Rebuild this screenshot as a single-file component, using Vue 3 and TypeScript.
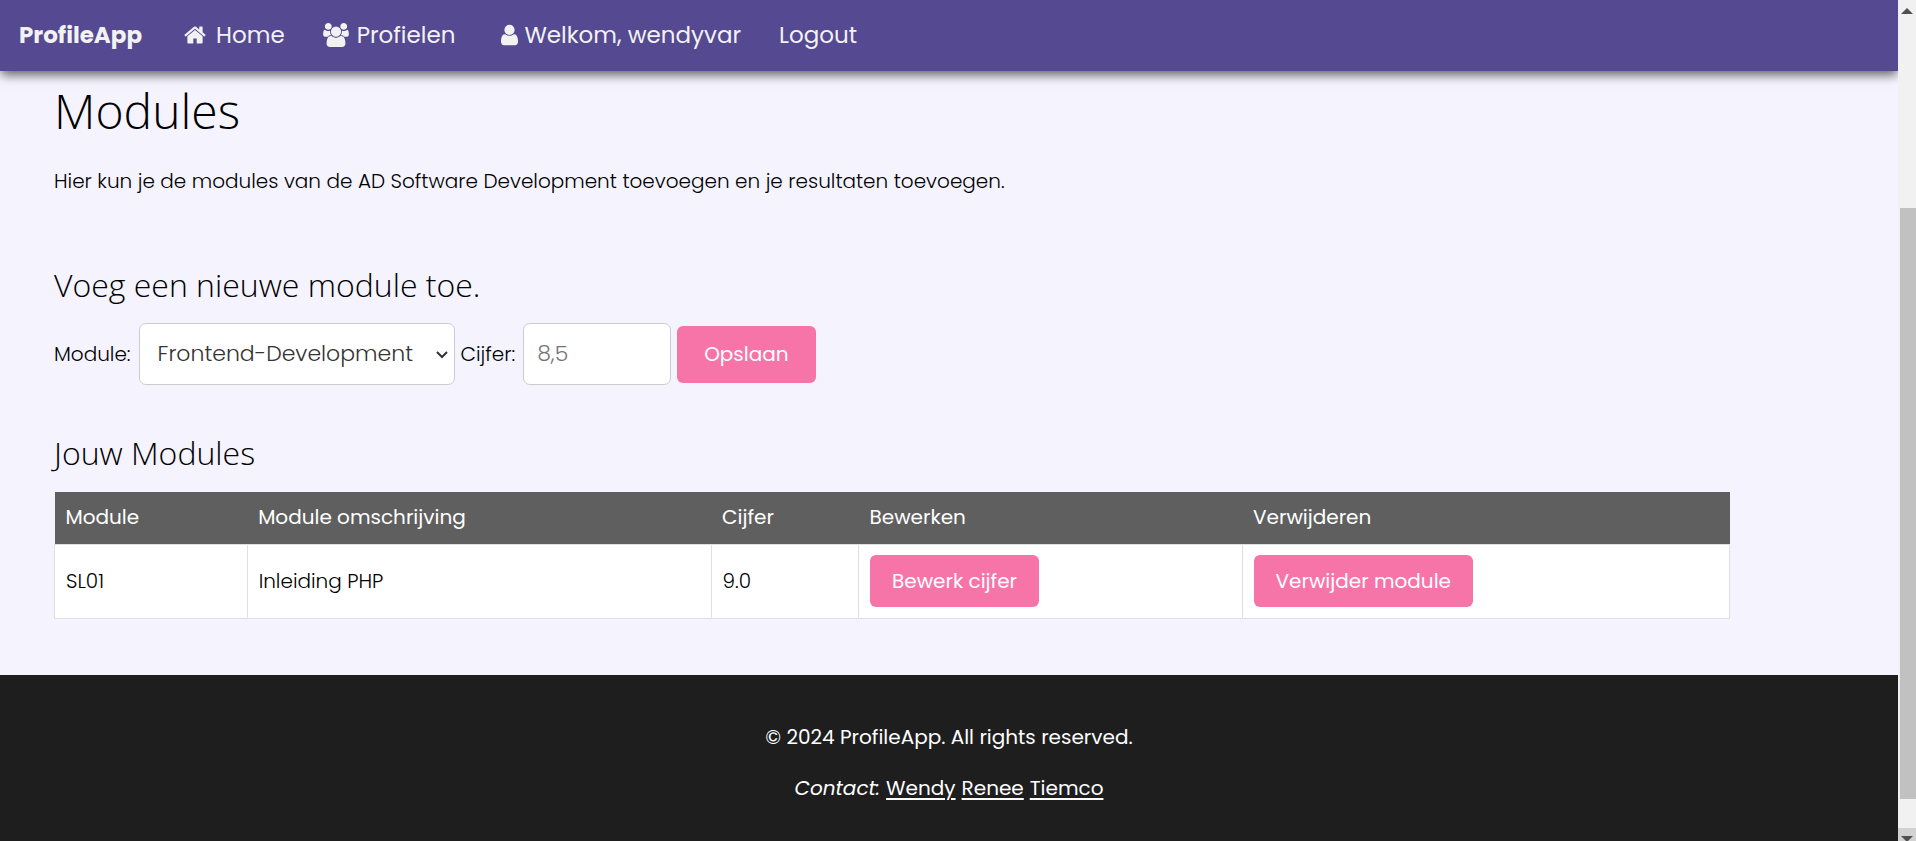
<script setup lang="ts">
import { ref } from 'vue'

interface ModuleRow {
  code: string
  description: string
  grade: string
}

const moduleOptions: string[] = ['Frontend-Development', 'Inleiding PHP']
const selectedModule = ref<string>('Frontend-Development')
const grade = ref<string>('')
const rows = ref<ModuleRow[]>([{ code: 'SL01', description: 'Inleiding PHP', grade: '9.0' }])
const contacts: string[] = ['Wendy', 'Renee', 'Tiemco']
</script>

<template>
  <div class="window">
    <div class="page">
      <nav class="navbar">
        <a class="brand" href="#">ProfileApp</a>
        <a class="nav-link home" href="#">
          <svg class="icon" width="22" height="24" viewBox="0 0 1664 1792" aria-hidden="true">
            <path d="M1408 992v480q0 26-19 45t-45 19h-384v-384h-256v384h-384q-26 0-45-19t-19-45v-480q0-1 .5-3t.5-3l575-474 575 474q1 2 1 6zm223-69l-62 74q-8 9-21 11h-3q-13 0-21-7l-692-577-692 577q-12 8-24 7-13-2-21-11l-62-74q-8-10-7-23.5t11-21.5l719-599q32-26 76-26t76 26l244 204v-195q0-14 9-23t23-9h192q14 0 23 9t9 23v408l219 182q10 8 11 21.5t-7 23.5z" />
          </svg>
          <span>Home</span>
        </a>
        <a class="nav-link" href="#">
          <svg class="icon" width="26" height="24" viewBox="0 0 1920 1792" aria-hidden="true">
            <path d="M593 896q-162 5-265 128h-134q-82 0-138-40.5t-56-118.5q0-353 124-353 6 0 43.5 21t97.5 42.5 119 21.5q67 0 133-23-5 37-5 66 0 139 81 256zm1071 637q0 120-73 189.5t-194 69.5h-874q-121 0-194-69.5t-73-189.5q0-53 3.5-103.5t14-109 26.5-108.5 43-97.5 62-81 85.5-53.5 111.5-20q10 0 43 21.5t73 48 107 48 135 21.5 135-21.5 107-48 73-48 43-21.5q61 0 111.5 20t85.5 53.5 62 81 43 97.5 26.5 108.5 14 109 3.5 103.5zm-1024-1277q0 106-75 181t-181 75-181-75-75-181 75-181 181-75 181 75 75 181zm704 384q0 159-112.5 271.5t-271.5 112.5-271.5-112.5-112.5-271.5 112.5-271.5 271.5-112.5 271.5 112.5 112.5 271.5zm576 225q0 78-56 118.5t-138 40.5h-134q-103-123-265-128 81-117 81-256 0-29-5-66 66 23 133 23 59 0 119-21.5t97.5-42.5 43.5-21q124 0 124 353zm-128-609q0 106-75 181t-181 75-181-75-75-181 75-181 181-75 181 75 75 181z" />
          </svg>
          <span>Profielen</span>
        </a>
        <a class="nav-link account" href="#">
          <svg class="icon" width="17" height="24" viewBox="0 0 1280 1792" aria-hidden="true">
            <path d="M1280 1399q0 109-62.5 187t-150.5 78h-854q-88 0-150.5-78t-62.5-187q0-85 8.5-160.5t31.5-152 58.5-131 94-89 134.5-34.5q131 128 313 128t313-128q76 0 134.5 34.5t94 89 58.5 131 31.5 152 8.5 160.5zm-256-887q0 159-112.5 271.5t-271.5 112.5-271.5-112.5-112.5-271.5 112.5-271.5 271.5-112.5 271.5 112.5 112.5 271.5z" />
          </svg>
          <span>Welkom, wendyvar</span>
        </a>
        <a class="nav-link" href="#">Logout</a>
      </nav>

      <main class="content">
        <h1>Modules</h1>
        <p class="intro">Hier kun je de modules van de AD Software Development toevoegen en je resultaten toevoegen.</p>

        <h2>Voeg een nieuwe module toe.</h2>
        <form class="module-form" @submit.prevent>
          <label for="module">Module:</label>
          <div class="select-box">
            <select id="module" v-model="selectedModule">
              <option v-for="option in moduleOptions" :key="option" :value="option">{{ option }}</option>
            </select>
            <svg class="chevron" width="12" height="8" viewBox="0 0 12 8" aria-hidden="true">
              <path d="M1 1l5 5 5-5" />
            </svg>
          </div>
          <label for="grade">Cijfer:</label>
          <input id="grade" v-model="grade" type="text" placeholder="8,5" />
          <button class="btn save" type="submit">Opslaan</button>
        </form>

        <h2>Jouw Modules</h2>
        <table>
          <colgroup>
            <col class="col-code" />
            <col class="col-description" />
            <col class="col-grade" />
            <col class="col-edit" />
            <col class="col-delete" />
          </colgroup>
          <thead>
            <tr>
              <th>Module</th>
              <th>Module omschrijving</th>
              <th>Cijfer</th>
              <th>Bewerken</th>
              <th>Verwijderen</th>
            </tr>
          </thead>
          <tbody>
            <tr v-for="row in rows" :key="row.code">
              <td>{{ row.code }}</td>
              <td>{{ row.description }}</td>
              <td>{{ row.grade }}</td>
              <td><button class="btn" type="button">Bewerk cijfer</button></td>
              <td><button class="btn" type="button">Verwijder module</button></td>
            </tr>
          </tbody>
        </table>
      </main>

      <footer>
        <p>© 2024 ProfileApp. All rights reserved.</p>
        <address>
          <span>Contact:</span>
          <a v-for="contact in contacts" :key="contact" href="#">{{ contact }}</a>
        </address>
      </footer>
    </div>

    <div class="scrollbar" aria-hidden="true">
      <svg class="arrow" width="12" height="6" viewBox="0 0 12 6"><path d="M0 6 6 0l6 6z" /></svg>
      <div class="thumb"></div>
      <div class="scroll-down">
        <svg class="arrow" width="12" height="6" viewBox="0 0 12 6"><path d="M0 0l6 6 6-6z" /></svg>
      </div>
    </div>
  </div>
</template>

<style>
body {
  margin: 0;
  overflow: hidden;
}
</style>

<style scoped>
.window {
  display: grid;
  grid-template-columns: minmax(0, 1fr) 18px;
  height: 100vh;
  overflow: hidden;
  background: #f4f3fe;
  color: #000;
  font-family: Poppins, Inter, sans-serif;
  font-size: 20px;
  font-weight: 300;
  line-height: 32px;
}

.page {
  display: flex;
  flex-direction: column;
  overflow: hidden;
}

.navbar {
  display: flex;
  align-items: center;
  box-sizing: border-box;
  height: 71px;
  padding: 0 0 2px 19px;
  flex: none;
  background: #554991;
  box-shadow: 0 5px 10px -1px rgba(0, 0, 0, 0.6);
  font-size: 23px;
  font-weight: 400;
}

.navbar a {
  color: #f2f2f2;
  text-decoration: none;
}

.brand {
  margin-right: 42px;
  font-weight: 700;
}

.nav-link {
  display: flex;
  align-items: center;
  margin-right: 38px;
}

.icon {
  flex: none;
  margin-right: 8px;
  fill: currentColor;
  overflow: visible;
}

.home .icon {
  margin-right: 10px;
}

.account {
  margin-left: 8px;
}

.account .icon {
  margin-right: 6px;
}

.content {
  flex: 1;
  padding: 8px 168px 0 54px;
}

h1,
h2 {
  margin: 0;
  font-family: "Segoe UI", "Open Sans", sans-serif;
  font-weight: 300;
}

h1 {
  font-size: 48px;
  line-height: 64px;
}

h2 {
  font-size: 32px;
  line-height: 44px;
}

.intro {
  margin: 22px 0 66px;
}

.module-form {
  display: flex;
  align-items: center;
  gap: 6px;
  margin: 16px 0 46px;
}

label {
  margin-right: 2px;
}

select,
input {
  box-sizing: border-box;
  height: 62px;
  border: 1px solid #ccc;
  border-radius: 7px;
  background: #fff;
  color: #333;
  font: inherit;
  font-size: 22px;
}

.select-box {
  position: relative;
  display: flex;
}

select {
  width: 316px;
  padding: 0 18px;
  appearance: none;
}

.chevron {
  position: absolute;
  top: 28px;
  right: 7px;
  fill: none;
  stroke: #333;
  stroke-width: 2;
  pointer-events: none;
}

input {
  width: 148px;
  padding: 0 13px 2px;
}

input::placeholder {
  color: #757575;
}

.btn {
  height: 52px;
  padding: 0 22px;
  border: 0;
  border-radius: 6px;
  background: #f774a9;
  color: #fff;
  font: inherit;
  font-weight: 400;
}

.save {
  height: 57px;
  padding: 0 27px;
}

table {
  width: 100%;
  margin-top: 17px;
  border-collapse: collapse;
  table-layout: fixed;
}

.col-code {
  width: 11.5%;
}

.col-description {
  width: 27.7%;
}

.col-grade {
  width: 8.8%;
}

.col-edit {
  width: 22.9%;
}

.col-delete {
  width: 29.1%;
}

th {
  box-sizing: border-box;
  height: 52px;
  padding: 0 11px 2px;
  background: #5f5f5f;
  color: #fff;
  font-weight: 400;
  text-align: left;
}

td {
  height: 73px;
  padding: 0 11px;
  border: 1px solid #e0e0e0;
  background: #fff;
}

footer {
  flex: none;
  box-sizing: border-box;
  height: 166px;
  padding-top: 46px;
  background: #1e1e1e;
  color: #fff;
  font-weight: 400;
  text-align: center;
}

footer p {
  margin: 0 0 19px;
}

address {
  display: flex;
  justify-content: center;
  gap: 6px;
}

address a {
  color: #fff;
  font-style: normal;
  text-decoration: underline;
  text-underline-offset: 3px;
}

.scrollbar {
  display: flex;
  flex-direction: column;
  align-items: center;
  background: #f1f1f1;
}

.arrow {
  flex: none;
  margin-top: 8px;
  fill: #505050;
}

.thumb {
  align-self: flex-end;
  width: 16px;
  margin: 194px 0 29px;
  flex: 1;
  background: #c1c1c1;
}

.scroll-down {
  display: flex;
  justify-content: center;
  width: 100%;
  height: 13px;
  overflow: hidden;
  background: #d2d2d2;
}
</style>
